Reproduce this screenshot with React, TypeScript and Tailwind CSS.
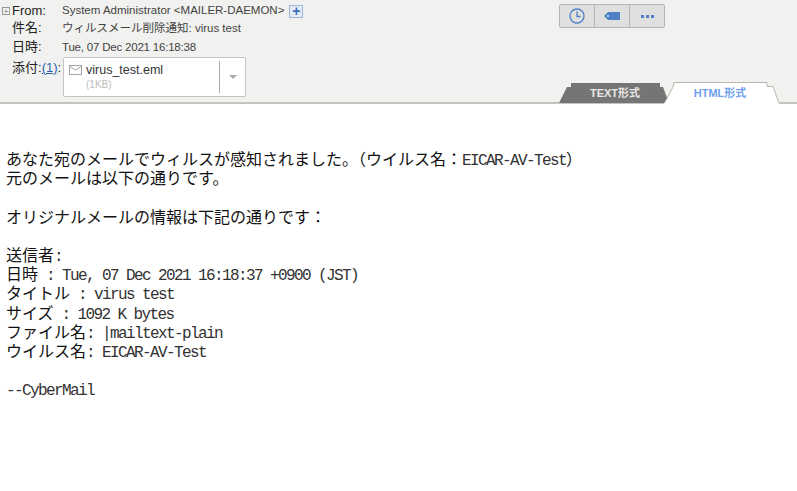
import { ReactNode } from 'react';

function Body({ text }: { text: string }) {
  // half-width runs are 8px wide, full-width runs 16px, like a bitmap gothic
  const parts = text.split(/([\x20-\x7e]+)/).filter(Boolean);
  return (
    <div className="h-[19.2px] whitespace-pre leading-[19.2px]">
      {parts.map((p, i) =>
        /^[\x20-\x7e]/.test(p) ? (
          <span key={i} className="font-['Liberation_Mono',monospace] text-[16px] tracking-[-1.6px] text-[#333]">{p}</span>
        ) : (
          <span key={i}>{p}</span>
        )
      )}
    </div>
  );
}

function Label({ children, className }: { children: ReactNode; className?: string }) {
  return <div className={`text-[13px] leading-[16px] text-[#222] ${className ?? ''}`}>{children}</div>;
}

const lines = [
  'あなた宛のメールでウィルスが感知されました。（ウイルス名：EICAR-AV-Test）',
  '元のメールは以下の通りです。',
  '',
  'オリジナルメールの情報は下記の通りです：',
  '',
  '送信者:',
  '日時 : Tue, 07 Dec 2021 16:18:37 +0900 (JST)',
  'タイトル : virus test',
  'サイズ : 1092 K bytes',
  'ファイル名: |mailtext-plain',
  'ウイルス名: EICAR-AV-Test',
  '',
  '--CyberMail',
];

export default function App() {
  return (
    <div className="h-[491px] w-[797px] overflow-hidden bg-white font-['Liberation_Sans','Noto_Sans_CJK_JP',sans-serif]">
      <header className="flex h-[104px] border-b-2 border-[#c4c4c0] bg-[#f1f1ef]">
        <div className="flex w-[62px] shrink-0 flex-col pt-[3px]">
          <div className="flex items-center">
            <span className="ml-[2px] flex h-[8px] w-[8px] items-center justify-center border border-[#999] text-[7px] leading-none text-[#666]">+</span>
            <Label className="ml-[2px]">From:</Label>
          </div>
          <Label className="ml-[12px] mt-[1px]">件名:</Label>
          <Label className="ml-[12px] mt-[3px]">日時:</Label>
          <Label className="ml-[12px] mt-[5px]">
            添付:<span className="text-[#2a5db0] underline">(1)</span>:
          </Label>
        </div>
        <div className="flex w-[498px] shrink-0 flex-col pt-[3px] text-[11.5px] text-[#444]">
          <div className="flex h-[16px] items-center">
            <span>System Administrator &lt;MAILER-DAEMON&gt;</span>
            <span className="ml-[5px] flex h-[13px] w-[14px] items-center justify-center border border-[#9db8dc] bg-[#e4ebf5] text-[14px] font-bold leading-none text-[#3f6fb5]">+</span>
          </div>
          <div className="mt-[1px] h-[16px] leading-[16px]">ウィルスメール削除通知: virus test</div>
          <div className="mt-[3px] h-[16px] tracking-[-0.2px] leading-[16px]">Tue, 07 Dec 2021 16:18:38</div>
          <div className="ml-[1px] mt-[2px] flex h-[40px] w-[183px] items-stretch rounded-[2px] border border-[#c4c4c4] bg-white">
            <div className="flex w-[155px] flex-col pl-[5px] pt-[4px]">
              <div className="flex items-center">
                <svg width="13" height="10" viewBox="0 0 13 10" fill="none" stroke="#a5a5a5" strokeWidth="1">
                  <rect x="0.5" y="0.5" width="12" height="9" />
                  <path d="M1 1.5 6.5 5 12 1.5" />
                </svg>
                <span className="ml-[4px] text-[12.5px] leading-[16px] text-[#333]">virus_test.eml</span>
              </div>
              <span className="ml-[17px] text-[10px] leading-[13px] text-[#bbb]">(1KB)</span>
            </div>
            <div className="my-[3px] w-px bg-[#aaa]" />
            <div className="flex flex-1 items-center justify-center">
              <span className="h-0 w-0 border-x-[4px] border-t-[4px] border-x-transparent border-t-[#aaa]" />
            </div>
          </div>
        </div>
        <div className="relative flex-1">
          <div className="ml-[-1px] mt-[4px] flex h-[24px] w-[106px] rounded-[2px] border border-[#b5b5b5] bg-[#dfdfdf]">
            <div className="flex w-[35px] items-center justify-center border-r border-[#b5b5b5]">
              <svg width="16" height="16" viewBox="0 0 16 16" fill="none" stroke="#5080c8" strokeWidth="1.3">
                <circle cx="8" cy="8" r="7" />
                <path d="M8 3.5V8.5H11.5" />
              </svg>
            </div>
            <div className="flex w-[35px] items-center justify-center border-r border-[#b5b5b5]">
              <svg width="16" height="8" viewBox="0 0 16 8">
                <path d="M0 4 4 0H16V8H4Z" fill="#4f7fc6" />
                <circle cx="4" cy="4" r="1" fill="#dfdfdf" />
              </svg>
            </div>
            <div className="flex flex-1 items-center justify-center gap-[2px]">
              <span className="h-[3px] w-[3px] bg-[#4f7fc6]" />
              <span className="h-[3px] w-[3px] bg-[#4f7fc6]" />
              <span className="h-[3px] w-[3px] bg-[#4f7fc6]" />
            </div>
          </div>
          {/* format tabs sit on the header's bottom rule */}
          <div className="absolute bottom-[-2px] left-[-3px] flex h-[22px] w-[222px] items-center text-[11px] font-bold">
            <svg className="absolute inset-0" width="222" height="22" viewBox="0 0 222 22">
              <path d="M2 21 10 5H14V1H103V5H106L112 21Z" fill="#757575" />
              <path d="M107 22 116 5 117 1H210V5H216L222 22Z" fill="#fff" />
              <path d="M107.5 21 116 5 117 .5H210V4.500H216L221.500 20" fill="none" stroke="#b8b8b0" />
            </svg>
            <span className="relative w-[116px] text-center text-[#e8e8e8]">TEXT形式</span>
            <span className="relative w-[94px] text-center text-[#6f9ff0]">HTML形式</span>
          </div>
        </div>
      </header>
      <main className="pl-[6px] pt-[48px] font-['Liberation_Mono','Noto_Sans_CJK_JP',monospace] text-[16px] text-[#111]">
        {lines.map((l, i) => (
          <Body key={i} text={l} />
        ))}
      </main>
    </div>
  );
}
